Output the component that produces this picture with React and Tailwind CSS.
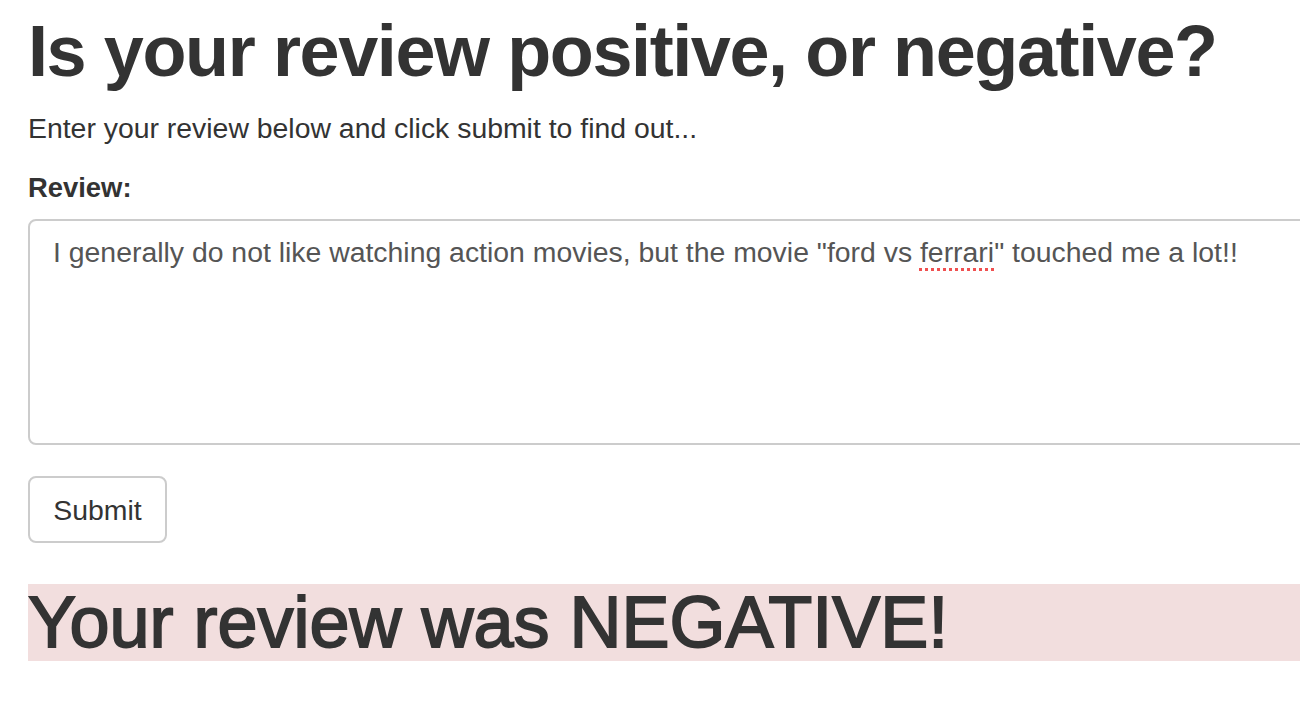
export default function App() {
  return (
    <div className="min-h-[726px] w-[1300px] overflow-hidden bg-white font-['Liberation_Sans',Arial,sans-serif] text-[#333]">
      <div className="w-[1320px] pl-[28px]">
        <h1 className="mt-[11px] text-[72px] font-bold leading-[80px] tracking-[-1.4px]">
          Is your review positive, or negative?
        </h1>
        <p className="mt-[17px] text-[28.4px] leading-[40px]">Enter your review below and click submit to find out...</p>

        <form className="mt-[20px]" onSubmit={(e) => e.preventDefault()}>
          <label htmlFor="review" className="block text-[27.4px] font-bold leading-[40px]">
            Review:
          </label>
          {/* textarea look-alike so the spellcheck dots on "ferrari" show */}
          <div
            id="review"
            role="textbox"
            className="mt-[11px] h-[226px] w-full rounded-[8px] border-2 border-[#ccc] px-[23px] py-[11px] text-[28.4px] leading-[40px] text-[#555]"
          >
            I generally do not like watching action movies, but the movie "ford vs{' '}
            <span className="underline decoration-[#f05050] decoration-dotted decoration-[3px] underline-offset-[6px]">
              ferrari
            </span>
            " touched me a lot!!
          </div>
          <button
            type="submit"
            className="mt-[31px] h-[67px] w-[139px] rounded-[8px] border-2 border-[#ccc] bg-white pt-[1px] text-[28.4px] leading-[40px] text-[#333]"
          >
            Submit
          </button>
        </form>

        <h1 className="mt-[41px] bg-[#f2dede] text-[72px] leading-[77px] [-webkit-text-stroke:1.8px_#333]">
          Your review was NEGATIVE!
        </h1>
      </div>
    </div>
  )
}
